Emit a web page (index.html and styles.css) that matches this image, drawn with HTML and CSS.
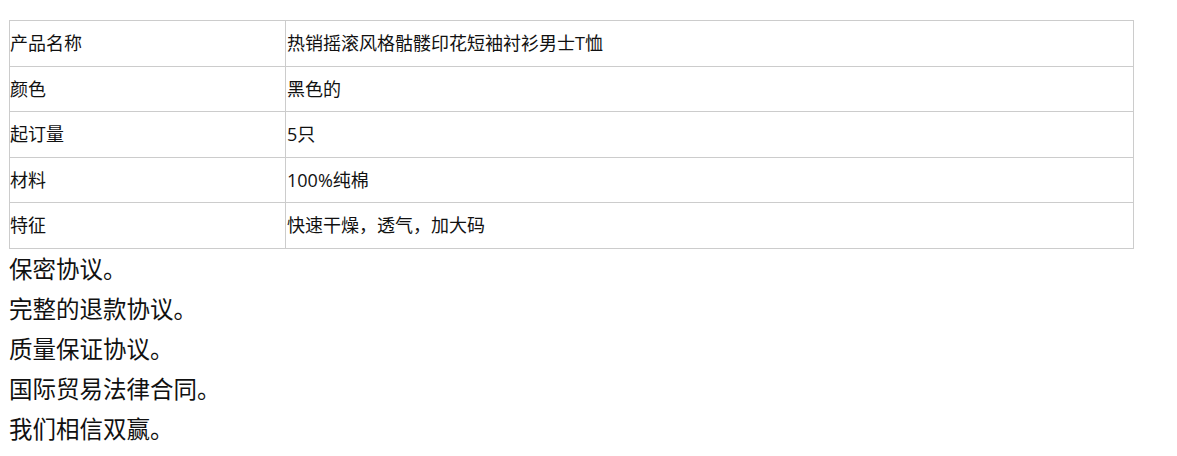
FILE: index.html
```html
<!DOCTYPE html>
<html>
<head>
    <meta charset="utf-8">
    <title>产品详情</title>
    <link rel="stylesheet" href="styles.css">
</head>
<body>
    <table class="spec">
        <tr>
            <td class="spec-key">产品名称</td>
            <td>热销摇滚风格骷髅印花短袖衬衫男士T恤</td>
        </tr>
        <tr>
            <td class="spec-key">颜色</td>
            <td>黑色的</td>
        </tr>
        <tr>
            <td class="spec-key">起订量</td>
            <td>5只</td>
        </tr>
        <tr>
            <td class="spec-key">材料</td>
            <td>100%纯棉</td>
        </tr>
        <tr>
            <td class="spec-key">特征</td>
            <td>快速干燥，透气，加大码</td>
        </tr>
    </table>

    <div class="terms">
        <p>保密协议。</p>
        <p>完整的退款协议。</p>
        <p>质量保证协议。</p>
        <p>国际贸易法律合同。</p>
        <p>我们相信双赢。</p>
    </div>
</body>
</html>
```

FILE: styles.css
```css
body {margin: 0; padding: 20px 0 0 9px; color: #111; font-family: "Open Sans", "Noto Sans CJK SC", sans-serif;}
.spec {width: 1125px; border-collapse: collapse; font-size: 18px; line-height: 24.6px;}
.spec td {border: 1px solid #ccc; padding: 10px 1px; vertical-align: middle;}
.spec .spec-key {width: 274px; padding-left: 0;}
.terms {font-size: 23.5px; line-height: 40px;}
.terms p {margin: 0;}
```
